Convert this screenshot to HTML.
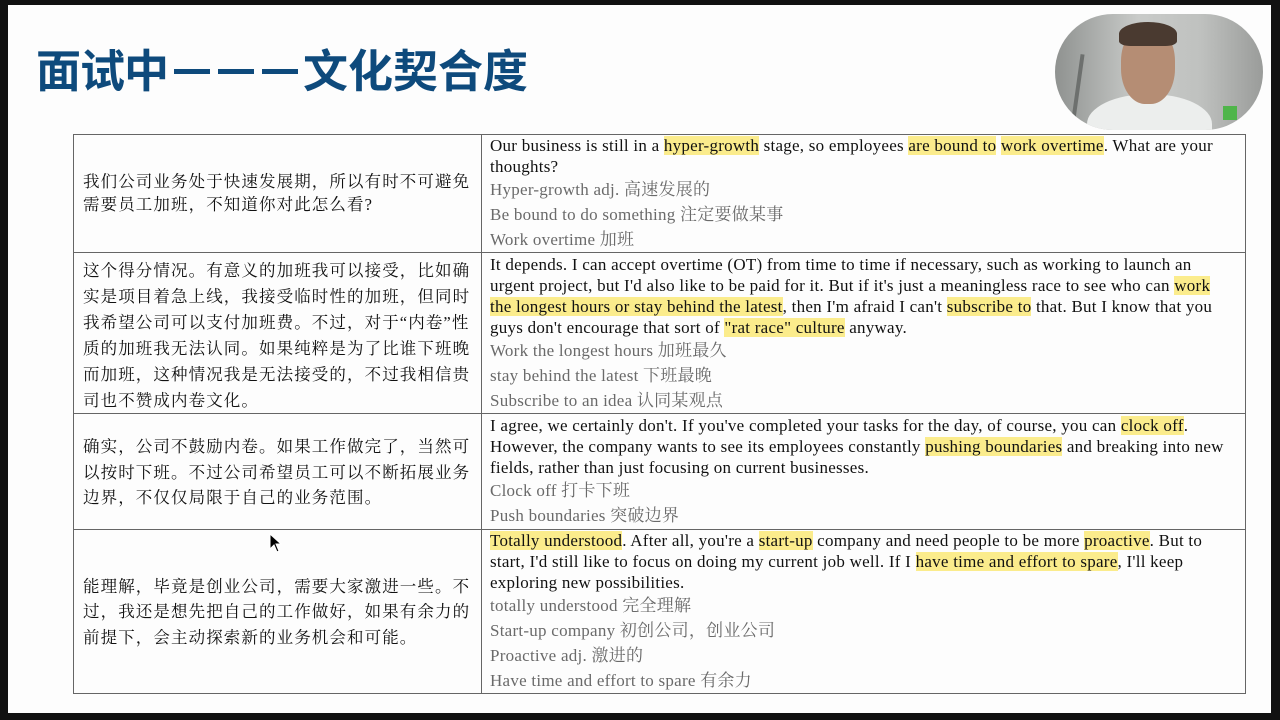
<!DOCTYPE html>
<html><head><meta charset="utf-8"><style>
html,body{margin:0;padding:0;}
body{width:1280px;height:720px;background:#111;position:relative;overflow:hidden;}
.page{position:absolute;left:8px;top:5px;width:1263px;height:708px;background:#fdfdfd;}
.ti{position:absolute;top:38px;font:bold 45px "Noto Sans CJK SC",sans-serif;color:#0e4a7c;white-space:nowrap;line-height:60px;}
.dash{position:absolute;top:69px;height:5px;width:36px;background:#0e4a7c;}
.cam{position:absolute;left:1055px;top:14px;width:208px;height:116px;border-radius:58px/58px;overflow:hidden;background:linear-gradient(90deg,#8f9290,#c9cbc9 40%,#bfc1bf 70%,#9a9c9a);}
.l{position:absolute;background:#666;}
.t{position:absolute;white-space:nowrap;font-family:"Liberation Serif","Noto Serif CJK SC",serif;font-size:17px;letter-spacing:0.25px;line-height:20px;color:#111;}
.g{color:#6a6a6a;}
.z{position:absolute;white-space:nowrap;font-family:"Liberation Serif","Noto Serif CJK SC",serif;font-size:16.5px;letter-spacing:1.1px;line-height:20px;color:#111;}
.h{background:#fbec8c;}
</style></head><body>
<div class="page"></div>
<div class="ti" style="left:36px;letter-spacing:-1px">面试中</div>
<div class="dash" style="left:174px"></div>
<div class="dash" style="left:218px"></div>
<div class="dash" style="left:262px"></div>
<div class="ti" style="left:303px;letter-spacing:0px">文化契合度</div>
<div class="cam">
 <div style="position:absolute;left:20px;top:40px;width:4px;height:80px;background:#6d706e;transform:rotate(8deg)"></div>
 <div style="position:absolute;left:32px;top:80px;width:125px;height:60px;border-radius:50% 50% 0 0;background:#eceeed"></div>
 <div style="position:absolute;left:66px;top:12px;width:54px;height:78px;border-radius:45%;background:#b58d74"></div>
 <div style="position:absolute;left:64px;top:8px;width:58px;height:24px;border-radius:50% 50% 20% 20%;background:#4a3a30"></div>
 <div style="position:absolute;left:168px;top:92px;width:14px;height:14px;background:#4fb54a"></div>
</div>
<div class="l" style="left:73px;top:134px;width:1173px;height:1px"></div>
<div class="l" style="left:73px;top:252px;width:1173px;height:1px"></div>
<div class="l" style="left:73px;top:413px;width:1173px;height:1px"></div>
<div class="l" style="left:73px;top:529px;width:1173px;height:1px"></div>
<div class="l" style="left:73px;top:693px;width:1173px;height:1px"></div>
<div class="l" style="left:73px;top:134px;width:1px;height:560px"></div>
<div class="l" style="left:481px;top:134px;width:1px;height:560px"></div>
<div class="l" style="left:1245px;top:134px;width:1px;height:560px"></div>

<div class="z" style="left:83px;top:172px">我们公司业务处于快速发展期，所以有时不可避免</div>
<div class="z" style="left:83px;top:195px">需要员工加班，不知道你对此怎么看?</div>

<div class="z" style="left:83px;top:261px">这个得分情况。有意义的加班我可以接受，比如确</div>
<div class="z" style="left:83px;top:287px">实是项目着急上线，我接受临时性的加班，但同时</div>
<div class="z" style="left:83px;top:313px">我希望公司可以支付加班费。不过，对于“内卷”性</div>
<div class="z" style="left:83px;top:339px">质的加班我无法认同。如果纯粹是为了比谁下班晚</div>
<div class="z" style="left:83px;top:365px">而加班，这种情况我是无法接受的，不过我相信贵</div>
<div class="z" style="left:83px;top:391px">司也不赞成内卷文化。</div>

<div class="z" style="left:83px;top:437px">确实，公司不鼓励内卷。如果工作做完了，当然可</div>
<div class="z" style="left:83px;top:463px">以按时下班。不过公司希望员工可以不断拓展业务</div>
<div class="z" style="left:83px;top:488px">边界，不仅仅局限于自己的业务范围。</div>

<div class="z" style="left:83px;top:577px">能理解，毕竟是创业公司，需要大家激进一些。不</div>
<div class="z" style="left:83px;top:602px">过，我还是想先把自己的工作做好，如果有余力的</div>
<div class="z" style="left:83px;top:628px">前提下，会主动探索新的业务机会和可能。</div>

<div class="t" style="left:490px;top:136px">Our business is still in a <span class="h">hyper-growth</span> stage, so employees <span class="h">are bound to</span> <span class="h">work overtime</span>. What are your</div>
<div class="t" style="left:490px;top:157px">thoughts?</div>
<div class="t g" style="left:490px;top:180px">Hyper-growth adj. 高速发展的</div>
<div class="t g" style="left:490px;top:205px">Be bound to do something 注定要做某事</div>
<div class="t g" style="left:490px;top:230px">Work overtime 加班</div>

<div class="t" style="left:490px;top:255px">It depends. I can accept overtime (OT) from time to time if necessary, such as working to launch an</div>
<div class="t" style="left:490px;top:276px">urgent project, but I'd also like to be paid for it. But if it's just a meaningless race to see who can <span class="h">work</span></div>
<div class="t" style="left:490px;top:297px"><span class="h">the longest hours or stay behind the latest</span>, then I'm afraid I can't <span class="h">subscribe to</span> that. But I know that you</div>
<div class="t" style="left:490px;top:318px">guys don't encourage that sort of <span class="h">"rat race" culture</span> anyway.</div>
<div class="t g" style="left:490px;top:341px">Work the longest hours 加班最久</div>
<div class="t g" style="left:490px;top:366px">stay behind the latest 下班最晚</div>
<div class="t g" style="left:490px;top:391px">Subscribe to an idea 认同某观点</div>

<div class="t" style="left:490px;top:416px">I agree, we certainly don't. If you've completed your tasks for the day, of course, you can <span class="h">clock off</span>.</div>
<div class="t" style="left:490px;top:437px">However, the company wants to see its employees constantly <span class="h">pushing boundaries</span> and breaking into new</div>
<div class="t" style="left:490px;top:458px">fields, rather than just focusing on current businesses.</div>
<div class="t g" style="left:490px;top:481px">Clock off 打卡下班</div>
<div class="t g" style="left:490px;top:506px">Push boundaries 突破边界</div>

<div class="t" style="left:490px;top:531px"><span class="h">Totally understood</span>. After all, you're a <span class="h">start-up</span> company and need people to be more <span class="h">proactive</span>. But to</div>
<div class="t" style="left:490px;top:552px">start, I'd still like to focus on doing my current job well. If I <span class="h">have time and effort to spare</span>, I'll keep</div>
<div class="t" style="left:490px;top:573px">exploring new possibilities.</div>
<div class="t g" style="left:490px;top:596px">totally understood 完全理解</div>
<div class="t g" style="left:490px;top:621px">Start-up company 初创公司，创业公司</div>
<div class="t g" style="left:490px;top:646px">Proactive adj. 激进的</div>
<div class="t g" style="left:490px;top:671px">Have time and effort to spare 有余力</div>

<svg style="position:absolute;left:269px;top:533px" width="14" height="20" viewBox="0 0 14 20"><path d="M1 1 L1 16 L5 12 L8 19 L10 18 L7 11 L12 11 Z" fill="#000" stroke="#fff" stroke-width="1"/></svg>
</body></html>
